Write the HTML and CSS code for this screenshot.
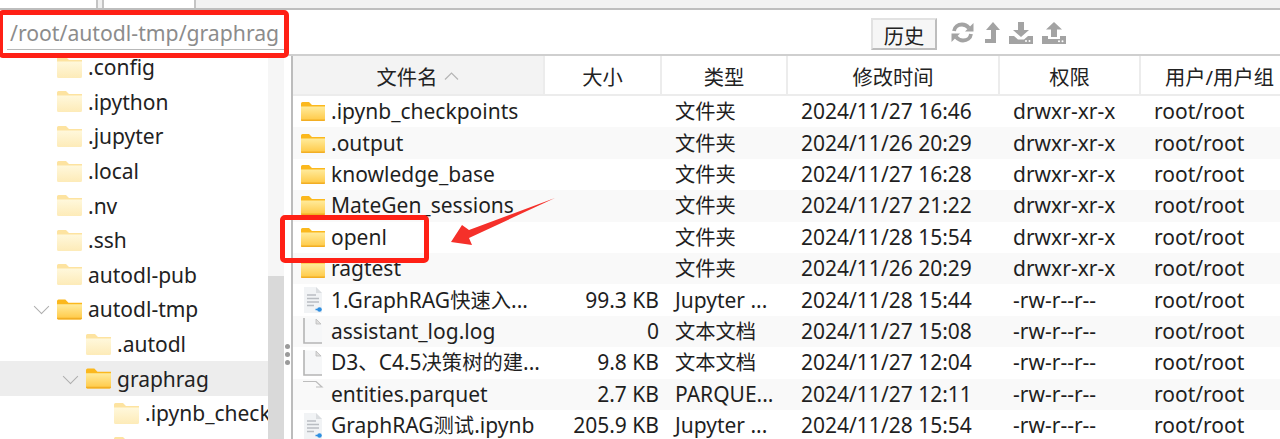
FILE: index.html
```html
<!DOCTYPE html>
<html lang="zh">
<head>
<meta charset="utf-8">
<title>文件管理</title>
<link rel="stylesheet" href="styles.css">
</head>
<body>
<svg class="defs" width="0" height="0">
  <defs>
    <linearGradient id="gs" x1="0" y1="0" x2="0" y2="1"><stop offset="0" stop-color="#ffeb9c"/><stop offset="1" stop-color="#ffc843"/></linearGradient>
    <linearGradient id="gl" x1="0" y1="0" x2="0" y2="1"><stop offset="0" stop-color="#fff8dc"/><stop offset="1" stop-color="#fdebb8"/></linearGradient>
    <symbol id="folder" viewBox="0 0 24 19">
      <path d="M0 1.500A1.500 1.500 0 0 1 1.500 0H8l3 3h13v3H0z" fill="#fbb81d"/>
      <path d="M0 4.500h24V17.500A1.500 1.500 0 0 1 22.500 19H1.500A1.500 1.500 0 0 1 0 17.500z" fill="url(#gs)"/>
      <path d="M0 17.500h24V18A1 1 0 0 1 23 19H1A1 1 0 0 1 0 18z" fill="#f2ae24"/>
    </symbol>
    <symbol id="folder-light" viewBox="0 0 25 21">
      <path d="M0 1.500A1.500 1.500 0 0 1 1.500 0H9l3 3h13v3H0z" fill="#fde3a0"/>
      <path d="M0 4.500h25V19.500A1.500 1.500 0 0 1 23.500 21H1.500A1.500 1.500 0 0 1 0 19.500z" fill="url(#gl)"/>
    </symbol>
    <symbol id="nb" viewBox="0 0 20 26">
      <path d="M1 0h12l6 6v20H1z" fill="#f1f3f5"/>
      <path d="M13 0l6 6h-6z" fill="#dadde0"/>
      <path d="M4 8h9M4 11.500h12M4 15h12M4 18.500h7" stroke="#b9bdc2" stroke-width="1.300" fill="none"/>
      <circle cx="16.500" cy="22.500" r="2.300" fill="#2f8fe0"/>
      <path d="M12.500 22.500h3" stroke="#2f8fe0" stroke-width="1.500"/>
    </symbol>
    <symbol id="doc" viewBox="0 0 20 26">
      <path d="M1 .500h12l6 5.500v19H1z" fill="#f6f7f8"/>
      <path d="M1 0V25H19" stroke="#b5b5b5" stroke-width="1.600" fill="none"/>
      <path d="M13 1v5h5z" fill="#dedede" stroke="#bdbdbd" stroke-width=".8"/>
    </symbol>
    <symbol id="blank" viewBox="0 0 20 26">
      <path d="M0 .500h13l6 5.500H13" stroke="#bdbdbd" stroke-width="1.200" fill="none"/>
    </symbol>
  </defs>
</svg>

<div class="tabs">
  <div class="tab tab-a"></div>
  <div class="tab tab-b"></div>
</div>

<header class="toolbar">
  <div class="path">/root/autodl-tmp/graphrag</div>
  <button class="history" type="button">历史</button>
  <div class="tools">
    <svg class="tool tool-first" width="23" height="21" viewBox="0 0 23 21" fill="none"><path d="M3 9C3.500 5 7 2.500 11 2.500c3 0 5 1.200 7 3.500" stroke="#a3a3a3" stroke-width="3.800"/><path d="M22.500 1v8.500H14z" fill="#a3a3a3"/><path d="M20 12c-.5 4-4 6.500-8 6.500-3 0-5-1.200-7-3.500" stroke="#a3a3a3" stroke-width="3.800"/><path d="M.5 20v-8.500H9z" fill="#a3a3a3"/></svg>
    <svg class="tool" width="15" height="21" viewBox="0 0 15 21"><path d="M8 0L15 8H11V21H0V17H6V8H1z" fill="#a3a3a3"/></svg>
    <svg class="tool" width="24" height="22" viewBox="0 0 24 22"><path d="M9 0h6v8h5l-8 7-8-7h5z" fill="#a3a3a3"/><path d="M0 14h5l4 3.500h6l4-3.500h5v8H0z" fill="#a3a3a3"/><circle cx="17" cy="19" r="1" fill="#fff"/><circle cx="20.500" cy="19" r="1" fill="#fff"/></svg>
    <svg class="tool" width="24" height="22" viewBox="0 0 24 22"><path d="M12 0l8 7.500h-5V15H9V7.500H4z" fill="#a3a3a3"/><path d="M0 14h6v3h12v-3h6v8H0z" fill="#a3a3a3"/><circle cx="17" cy="19.300" r="1" fill="#fff"/><circle cx="20.500" cy="19.300" r="1" fill="#fff"/></svg>
  </div>
</header>

<main class="panes">
  <nav class="tree">
    <div class="tree-list">
      <div class="node lv1"><span class="chev"></span><svg class="fi"><use href="#folder-light"/></svg><span>.config</span></div>
      <div class="node lv1"><span class="chev"></span><svg class="fi"><use href="#folder-light"/></svg><span>.ipython</span></div>
      <div class="node lv1"><span class="chev"></span><svg class="fi"><use href="#folder-light"/></svg><span>.jupyter</span></div>
      <div class="node lv1"><span class="chev"></span><svg class="fi"><use href="#folder-light"/></svg><span>.local</span></div>
      <div class="node lv1"><span class="chev"></span><svg class="fi"><use href="#folder-light"/></svg><span>.nv</span></div>
      <div class="node lv1"><span class="chev"></span><svg class="fi"><use href="#folder-light"/></svg><span>.ssh</span></div>
      <div class="node lv1"><span class="chev"></span><svg class="fi"><use href="#folder-light"/></svg><span>autodl-pub</span></div>
      <div class="node lv1"><span class="chev open"></span><svg class="fi"><use href="#folder"/></svg><span>autodl-tmp</span></div>
      <div class="node lv2"><span class="chev"></span><svg class="fi"><use href="#folder-light"/></svg><span>.autodl</span></div>
      <div class="node lv2 current"><span class="chev open"></span><svg class="fi"><use href="#folder"/></svg><span>graphrag</span></div>
      <div class="node lv3"><span class="chev"></span><svg class="fi"><use href="#folder-light"/></svg><span class="clip">.ipynb_check</span></div>
      <div class="node lv3"><span class="chev"></span><svg class="fi"><use href="#folder-light"/></svg></div>
    </div>
    <div class="scrollbar"><div class="thumb"></div></div>
  </nav>

  <div class="splitter"><i></i><i></i><i></i></div>

  <section class="table">
    <div class="row head">
      <div class="th sorted">文件名<svg class="sort" width="15" height="8" viewBox="0 0 15 8"><path d="M1 7.500L7.500 1 14 7.500" fill="none" stroke="#b5b5b5" stroke-width="1.200"/></svg></div>
      <div class="th">大小</div>
      <div class="th">类型</div>
      <div class="th">修改时间</div>
      <div class="th">权限</div>
      <div class="th th-last">用户/用户组</div>
    </div>
    <div class="row"><div class="td name"><svg class="ic"><use href="#folder"/></svg>.ipynb_checkpoints</div><div class="td size"></div><div class="td"><span class="zh">文件夹</span></div><div class="td">2024/11/27 16:46</div><div class="td">drwxr-xr-x</div><div class="td">root/root</div></div>
    <div class="row"><div class="td name"><svg class="ic"><use href="#folder"/></svg>.output</div><div class="td size"></div><div class="td"><span class="zh">文件夹</span></div><div class="td">2024/11/26 20:29</div><div class="td">drwxr-xr-x</div><div class="td">root/root</div></div>
    <div class="row"><div class="td name"><svg class="ic"><use href="#folder"/></svg>knowledge_base</div><div class="td size"></div><div class="td"><span class="zh">文件夹</span></div><div class="td">2024/11/27 16:28</div><div class="td">drwxr-xr-x</div><div class="td">root/root</div></div>
    <div class="row"><div class="td name"><svg class="ic"><use href="#folder"/></svg>MateGen_sessions</div><div class="td size"></div><div class="td"><span class="zh">文件夹</span></div><div class="td">2024/11/27 21:22</div><div class="td">drwxr-xr-x</div><div class="td">root/root</div></div>
    <div class="row"><div class="td name"><svg class="ic"><use href="#folder"/></svg>openl</div><div class="td size"></div><div class="td"><span class="zh">文件夹</span></div><div class="td">2024/11/28 15:54</div><div class="td">drwxr-xr-x</div><div class="td">root/root</div></div>
    <div class="row"><div class="td name"><svg class="ic"><use href="#folder"/></svg>ragtest</div><div class="td size"></div><div class="td"><span class="zh">文件夹</span></div><div class="td">2024/11/26 20:29</div><div class="td">drwxr-xr-x</div><div class="td">root/root</div></div>
    <div class="row"><div class="td name"><svg class="ic file"><use href="#nb"/></svg><span>1.GraphRAG<span class="zh">快速入</span>...</span></div><div class="td size">99.3 KB</div><div class="td">Jupyter ...</div><div class="td">2024/11/28 15:44</div><div class="td">-rw-r--r--</div><div class="td">root/root</div></div>
    <div class="row"><div class="td name"><svg class="ic file"><use href="#doc"/></svg>assistant_log.log</div><div class="td size">0</div><div class="td"><span class="zh">文本文档</span></div><div class="td">2024/11/27 15:08</div><div class="td">-rw-r--r--</div><div class="td">root/root</div></div>
    <div class="row"><div class="td name"><svg class="ic file"><use href="#doc"/></svg><span>D3<span class="zh">、</span>C4.5<span class="zh">决策树的建</span>...</span></div><div class="td size">9.8 KB</div><div class="td"><span class="zh">文本文档</span></div><div class="td">2024/11/27 12:04</div><div class="td">-rw-r--r--</div><div class="td">root/root</div></div>
    <div class="row"><div class="td name"><svg class="ic file"><use href="#blank"/></svg>entities.parquet</div><div class="td size">2.7 KB</div><div class="td">PARQUE...</div><div class="td">2024/11/27 12:11</div><div class="td">-rw-r--r--</div><div class="td">root/root</div></div>
    <div class="row"><div class="td name"><svg class="ic file"><use href="#nb"/></svg><span>GraphRAG<span class="zh">测试</span>.ipynb</span></div><div class="td size">205.9 KB</div><div class="td">Jupyter ...</div><div class="td">2024/11/28 15:54</div><div class="td">-rw-r--r--</div><div class="td">root/root</div></div>
  </section>
</main>

<div class="mark mark-path"></div>
<div class="mark mark-row"></div>
<svg class="arrow" width="110" height="52" viewBox="0 0 110 52"><path d="M104 1L18 33 11 28 0 45 21 48 18 41z" fill="#f5302a"/></svg>
</body>
</html>
```
FILE: styles.css
```css
* { box-sizing: border-box; }
html, body { margin: 0; height: 100%; }
body {
  width: 1280px;
  height: 439px;
  overflow: hidden;
  position: relative;
  background: #fff;
  color: #1f1f1f;
  font-family: "Noto Sans", "Noto Sans CJK SC", sans-serif;
  font-size: 21px;
}
.defs { position: absolute; }
.zh { font-size: 20.3px; }

.tabs {
  height: 10px;
  display: flex;
  gap: 4px;
  background: #f1f1f1;
  border-bottom: 2px solid #bdbdbd;
}
.tab { height: 8px; background: #fff; border-right: 2px solid #c4c4c4; }
.tab-a { width: 98px; }
.tab-b { width: 94px; border-left: 2px solid #c4c4c4; }

.toolbar {
  height: 46px;
  display: flex;
  align-items: flex-start;
  border-bottom: 2px solid #cfcfcf;
  padding-left: 7px;
}
.path {
  width: 278px;
  height: 40px;
  margin-right: 586px;
  padding-left: 3px;
  border-bottom: 1px solid #b8b8b8;
  color: #8c8c8c;
  line-height: 46px;
  font-size: 21.2px;
  white-space: nowrap;
}
.history {
  width: 66px;
  height: 32px;
  margin-top: 8px;
  padding: 0;
  background: #f6f6f6;
  border: 2px solid #e2e2e2;
  border-right-color: #bdbdbd;
  border-bottom-color: #bdbdbd;
  font: inherit;
  font-size: 20.3px;
  color: #222;
}
.tools {
  display: flex;
  align-items: flex-start;
  margin-left: 14px;
  margin-top: 12px;
}
.tool { display: block; margin-right: 9px; }
.tool-first { margin-right: 11px; }

.panes { display: flex; height: 384px; }

.tree {
  width: 284px;
  display: flex;
  overflow: hidden;
  margin-top: -6px;
  flex: none;
}
.tree-list { width: 268px; flex: none; overflow: hidden; }
.node {
  height: 34.6px;
  display: flex;
  align-items: center;
  white-space: nowrap;
  color: #222;
}
.lv1 { padding-left: 33px; }
.lv2 { padding-left: 62px; }
.lv3 { padding-left: 90px; }
.current { background: #ededed; }
.clip { min-width: 0; }
.chev { width: 24px; height: 12px; flex: none; position: relative; }
.chev.open::before {
  content: "";
  position: absolute;
  left: 3px;
  top: -2px;
  width: 10px;
  height: 10px;
  border-right: 1.500px solid #adadad;
  border-bottom: 1.500px solid #adadad;
  transform: rotate(45deg);
}
.fi { width: 25px; height: 21px; margin-right: 6px; flex: none; }

.scrollbar {
  width: 16px;
  flex: none;
  background: #f6f6f6;
  display: flex;
  flex-direction: column;
  justify-content: flex-end;
  margin-top: 6px;
}
.thumb { height: 164px; background: #d9d9d9; }

.splitter {
  width: 9px;
  flex: none;
  display: flex;
  flex-direction: column;
  align-items: center;
  gap: 3px;
  padding-top: 288px;
  border-right: 2px solid #bcbcbc;
}
.splitter i { width: 5px; height: 5px; border-radius: 50%; background: #9a9a9a; }

.table { flex: 1; min-width: 0; }
.row {
  display: grid;
  grid-template-columns: 252px 117px 126px 212px 141px 1fr;
  height: 31.4px;
  align-items: center;
  white-space: nowrap;
}
.row:nth-child(odd):not(.head) { background: #f9f9f9; }
.head {
  height: 40px;
  align-items: stretch;
  border-bottom: 2px solid #ececec;
  font-size: 20.3px;
}
.th {
  display: flex;
  align-items: center;
  justify-content: center;
  gap: 7px;
  border-right: 2px solid #ececec;
  padding-top: 1px;
  color: #222;
}
.th-last { border-right: 0; justify-content: flex-start; padding-left: 24px; }
.sorted { background: #f3f3f3; }
.td { padding-left: 13px; overflow: hidden; line-height: 33px; }
.td.name { padding-left: 8px; display: flex; align-items: center; }
.td.size { padding: 0 3px 0 0; text-align: right; }
.ic { width: 24px; height: 19px; margin-right: 6px; flex: none; }
.ic.file { height: 26px; }

.mark {
  position: absolute;
  border: 5px solid #ff2015;
  border-radius: 5px;
}
.mark-path { left: -2px; top: 10px; width: 291px; height: 48px; }
.mark-row { left: 280px; top: 215px; width: 149px; height: 48px; }
.arrow { position: absolute; left: 451px; top: 197px; }
```
